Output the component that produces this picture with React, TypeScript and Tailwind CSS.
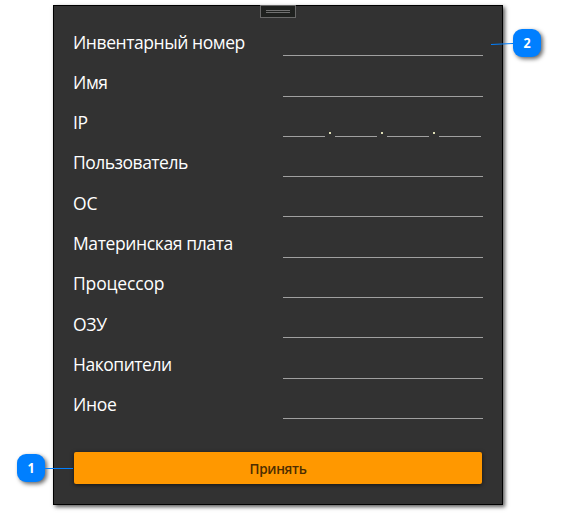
type Field = { label: string; row: string; text: string; ip?: boolean };

const fields: Field[] = [
  { label: "Инвентарный номер", row: "h-[40px]", text: "pb-[2px] tracking-[-0.43px]" },
  { label: "Имя", row: "h-[41px]", text: "pb-[3px] tracking-[-0.4px]" },
  { label: "IP", row: "h-[40px]", text: "pb-[3px] tracking-[-0.3px]", ip: true },
  { label: "Пользователь", row: "h-[40px]", text: "pb-[3px] tracking-[-0.5px]" },
  { label: "ОС", row: "h-[40px]", text: "pb-[2px]" },
  { label: "Материнская плата", row: "h-[41px]", text: "pb-[3px] tracking-[-0.38px]" },
  { label: "Процессор", row: "h-[40px]", text: "pb-[3px] tracking-[-0.15px]" },
  { label: "ОЗУ", row: "h-[40px]", text: "pb-[2px] tracking-[-0.3px]" },
  { label: "Накопители", row: "h-[41px]", text: "pb-[3px] tracking-[-0.48px]" },
  { label: "Иное", row: "h-[40px]", text: "pb-[3px] tracking-[-0.3px]" },
];

function IpInput() {
  return (
    <div className="flex w-[200px] items-end">
      {[0, 1, 2, 3].map((n) => (
        <div key={n} className="flex items-end">
          <div className="h-px w-[42px] bg-[#a0a0a0]" />
          {n < 3 && <div className="mr-[4px] mb-[3px] ml-[4px] h-[2px] w-[2px] bg-[#dcdcb4]" />}
        </div>
      ))}
    </div>
  );
}

function Badge({ children }: { children: string }) {
  return (
    <div className="flex h-[28px] w-[28px] items-center justify-center rounded-[9px] bg-[#007fff] font-['Open_Sans',sans-serif] text-[14px] leading-[28px] font-bold text-white shadow-[2px_2px_4px_rgba(0,0,0,0.6)]">
      <span className="scale-x-90">{children}</span>
    </div>
  );
}

export default function App() {
  return (
    <div className="relative h-[514px] w-[562px] overflow-hidden bg-white pt-[5px] pl-[53px] font-['Open_Sans','Noto_Sans',sans-serif]">
      <div className="flex h-[500px] w-[450px] flex-col border border-black bg-[#323232] shadow-[2px_2px_4px_rgba(0,0,0,0.65)]">
        <div className="-mt-px ml-[206px] flex h-[13px] w-[36px] shrink-0 flex-col items-center gap-px border border-[#686868] bg-[#1f211f] pt-[4px]">
          <div className="h-px w-[24px] bg-[#707070]" />
          <div className="h-px w-[24px] bg-[#707070]" />
        </div>
        <div className="-mt-[2px] flex flex-col pl-[19px]">
          {fields.map((f) => (
            <div key={f.label} className={`flex items-end ${f.row}`}>
              <div className="w-[210px] shrink-0">
                <div className={`text-[17.5px] leading-[24px] whitespace-nowrap text-white ${f.text}`}>{f.label}</div>
              </div>
              {f.ip ? <IpInput /> : <div className="h-px w-[200px] bg-[#a0a0a0]" />}
            </div>
          ))}
        </div>
        <button className="mt-[33px] ml-[20px] flex h-[32px] w-[408px] items-center justify-center rounded-[2px] bg-[#ff9800] pt-[2px] text-[13.5px] font-semibold tracking-[-0.3px] text-[#4c2d00] shadow-[0_1px_4px_rgba(0,0,0,0.6)]">
          Принять
        </button>
      </div>

      <div className="absolute top-[29px] left-[491px] flex items-center">
        <svg className="h-[28px] w-[22px]" viewBox="0 0 22 28" fill="none">
          <path d="M0 15.5L22 14.5" stroke="#007fff" />
        </svg>
        <Badge>2</Badge>
      </div>
      <div className="absolute top-[454px] left-[17px] flex items-start">
        <Badge>1</Badge>
        <div className="mt-[14px] h-px w-[28px] bg-[#007fff]" />
      </div>
    </div>
  );
}
